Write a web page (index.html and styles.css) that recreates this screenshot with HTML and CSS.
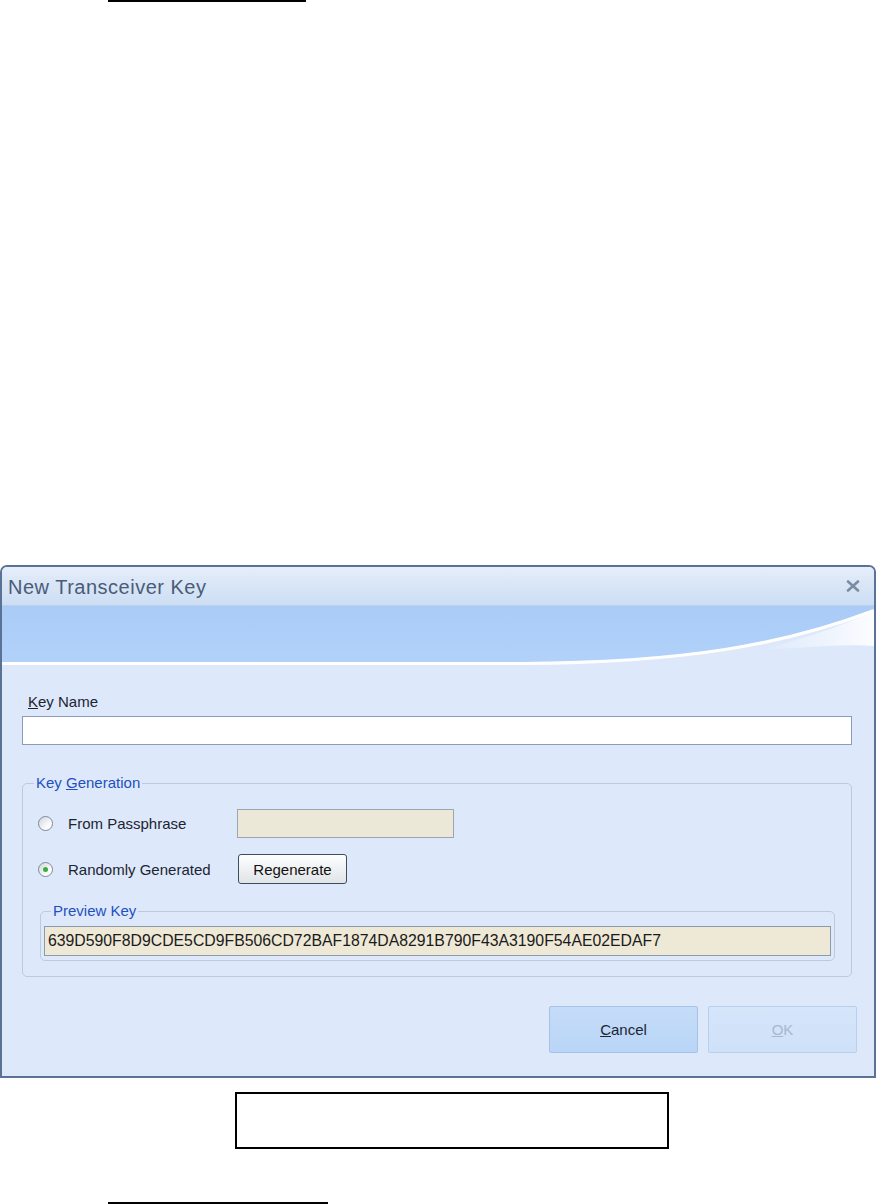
FILE: index.html
```html
<!DOCTYPE html>
<html lang="en">
<head>
  <meta charset="UTF-8" />
  <title>New Transceiver Key</title>
  <link rel="stylesheet" href="styles.css">
</head>
<body>

  <div class="rule rule-top"></div>

  <!-- Dialog -->
  <div class="dialog">
    <div class="titlebar">
      <span class="title">New Transceiver Key</span>
      <svg class="close" width="14" height="12" viewBox="0 0 14 12">
        <path d="M2 1.5 L12 10.5 M12 1.5 L2 10.5" stroke="#7b8ca3" stroke-width="2.6" stroke-linecap="round"/>
      </svg>
    </div>

    <svg class="band" width="872" height="60" viewBox="0 0 872 60" preserveAspectRatio="none">
      <defs>
        <linearGradient id="bandFill" x1="0" y1="0" x2="0" y2="1">
          <stop offset="0" stop-color="#a9cbf6"/>
          <stop offset="1" stop-color="#b2d2fa"/>
        </linearGradient>
        <linearGradient id="glow" x1="0" y1="0" x2="1" y2="0">
          <stop offset="0" stop-color="#ffffff" stop-opacity="0"/>
          <stop offset="1" stop-color="#ffffff" stop-opacity="0.9"/>
        </linearGradient>
      </defs>
      <rect x="0" y="0" width="872" height="60" fill="url(#bandFill)"/>
      <path d="M0 58 L520 58 C680 57 780 40 872 5 L872 60 L0 60 Z" fill="#dde9fb"/>
      <path d="M760 44 C810 30 845 18 872 5 L872 40 C850 38 820 40 760 44 Z" fill="url(#glow)"/>
      <path d="M0 57.5 L520 57.5 C680 56.5 780 39.5 872 4.5" fill="none" stroke="#ffffff" stroke-width="3.2"/>
    </svg>

    <div class="content">
      <label class="field-label"><u>K</u>ey Name</label>
      <div class="textbox"></div>

      <fieldset class="group">
        <legend class="legend">Key <u>G</u>eneration</legend>

        <div class="option-row">
          <span class="radio"></span>
          <span class="option-text">From Passphrase</span>
          <div class="textbox passphrase"></div>
        </div>

        <div class="option-row second">
          <span class="radio on"></span>
          <span class="option-text">Randomly Generated</span>
          <button class="small-btn">Regenerate</button>
        </div>

        <fieldset class="group preview">
          <legend class="legend preview-legend">Preview Key</legend>
          <div class="key-field">639D590F8D9CDE5CD9FB506CD72BAF1874DA8291B790F43A3190F54AE02EDAF7</div>
        </fieldset>
      </fieldset>

      <div class="actions">
        <button class="big-btn"><u>C</u>ancel</button>
        <button class="big-btn disabled"><u>O</u>K</button>
      </div>
    </div>
  </div>

  <div class="caption-box"></div>

  <div class="rule rule-bottom"></div>

</body>
</html>
```

FILE: styles.css
```css
body {
  margin: 0;
  background: #fff;
  font-family: 'Liberation Sans', Arial, sans-serif;
}

.rule {
  height: 2px;
  background: #000;
  margin-left: 108px;
}

.rule-top {
  width: 198px;
}

.rule-bottom {
  width: 220px;
  margin-top: 53px;
}

.dialog {
  margin-top: 563px;
  width: 876px;
  height: 513px;
  box-sizing: border-box;
  border: 2px solid #5a7293;
  border-radius: 7px 7px 0 0;
  background: #dde9fb;
  display: flex;
  flex-direction: column;
  overflow: hidden;
}

.titlebar {
  height: 38px;
  border-bottom: 1px solid #bcd0ea;
  background: linear-gradient(#e6eefa, #d9e6f7 45%, #cddef4);
  display: flex;
  align-items: center;
  justify-content: space-between;
  padding: 0 14px 0 6px;
}

.title {
  font-size: 20px;
  letter-spacing: 0.5px;
  color: #4a5c77;
  margin-top: 2px;
}

.band {
  display: block;
}

.content {
  padding: 27px 22px 21px 20px;
  display: flex;
  flex-direction: column;
  font-size: 15px;
  color: #1c2430;
}

.field-label {
  line-height: 18px;
  height: 18px;
  padding-left: 6px;
}

.textbox {
  height: 27px;
  margin-top: 5px;
  background: #fff;
  border: 1px solid #8a9cb7;
}

.group {
  margin: 29px 0 0 0;
  padding: 0 16px 15px 17px;
  border: 1px solid #bfcad8;
  border-radius: 5px;
  min-width: 0;
}

.legend {
  color: #1f50c0;
  font-size: 15px;
  line-height: 18px;
  padding: 0 2px;
  margin-left: -6px;
}

.option-row {
  display: flex;
  align-items: center;
  height: 29px;
  margin-top: 17px;
}

.option-row.second {
  height: 30px;
  margin-top: 16px;
}

.radio {
  width: 13px;
  height: 13px;
  margin-left: -2px;
  border: 1px solid #7c8a99;
  border-radius: 50%;
  background: linear-gradient(135deg, #cfd5dc, #fdfdfd 70%);
  box-sizing: content-box;
}

.radio.on::after {
  content: "";
  display: block;
  width: 5px;
  height: 5px;
  margin: 4px;
  border-radius: 50%;
  background: #3aae3a;
}

.option-text {
  margin-left: 15px;
  width: 169px;
}

.textbox.passphrase {
  margin: 0;
  width: 215px;
  height: 27px;
  background: #ece8d8;
  border-color: #9ba6b5;
}

.small-btn {
  width: 109px;
  height: 30px;
  margin-left: 1px;
  font-family: inherit;
  font-size: 15px;
  color: #111;
  border: 1px solid #3e4c60;
  border-radius: 3px;
  background: linear-gradient(#fefefe, #eceef0 60%, #e1e4e8);
  padding: 0;
}

.group.preview {
  margin: 18px 0 0 0;
  padding: 0 3px 4px 3px;
}

.preview-legend {
  margin-left: 7px;
}

.key-field {
  margin-top: 6px;
  height: 28px;
  line-height: 28px;
  padding-left: 3px;
  background: #eee8d6;
  border: 1px solid #8e9aab;
  font-size: 15.8px;
  color: #1a1a1a;
  white-space: nowrap;
  overflow: hidden;
}

.actions {
  margin-top: 29px;
  display: flex;
  justify-content: flex-end;
  gap: 10px;
  padding-right: 17px;
  margin-right: -22px;
}

.big-btn {
  width: 149px;
  height: 47px;
  font-family: inherit;
  font-size: 15px;
  color: #1c2633;
  border: 1px solid #a6c2e6;
  border-radius: 2px;
  background: linear-gradient(#c5dcf8, #b9d5f7);
  padding: 0;
}

.big-btn.disabled {
  color: #a8b8cd;
  border-color: #b9cfeb;
  background: linear-gradient(#d5e5fa, #cfe1f9);
}

.caption-box {
  margin: 14px 0 0 235px;
  width: 434px;
  height: 57px;
  box-sizing: border-box;
  border: 2px solid #000;
}
```
